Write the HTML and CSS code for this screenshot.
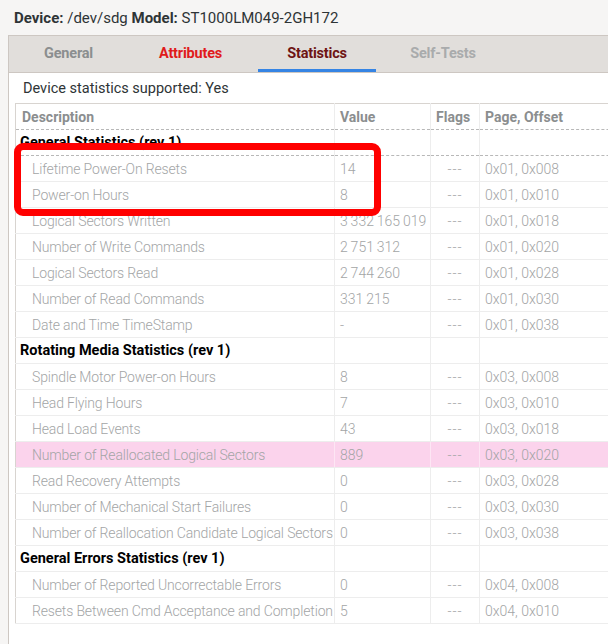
FILE: index.html
```html
<!DOCTYPE html>
<html lang="en">
<head>
    <meta charset="UTF-8">
    <title>Device Statistics</title>
    <link rel="stylesheet" href="styles.css">
</head>
<body>
    <div class="device-line">
        <b>Device:</b> /dev/sdg <b>Model:</b> ST1000LM049-2GH172
    </div>
    <div class="frame">
        <div class="tabs">
            <div class="tab tab-general">General</div>
            <div class="tab tab-attributes">Attributes</div>
            <div class="tab tab-statistics active">Statistics</div>
            <div class="tab tab-selftests">Self-Tests</div>
        </div>
        <div class="page">
            <div class="supported">Device statistics supported: Yes</div>
            <div class="table-wrap">
                <table class="stats">
                    <colgroup>
                        <col class="c-desc">
                        <col class="c-value">
                        <col class="c-flags">
                        <col class="c-page">
                    </colgroup>
                    <thead>
                        <tr>
                            <th>Description</th>
                            <th>Value</th>
                            <th>Flags</th>
                            <th>Page, Offset</th>
                        </tr>
                    </thead>
                    <tbody id="rows"></tbody>
                </table>
                <div class="highlight-box"></div>
            </div>
        </div>
    </div>

    <script>
        const rows = [
            ['h', 'General Statistics (rev 1)'],
            ['r', 'Lifetime Power-On Resets', '14', '0x01, 0x008'],
            ['r', 'Power-on Hours', '8', '0x01, 0x010'],
            ['r', 'Logical Sectors Written', '3\u2009332\u2009165\u2009019', '0x01, 0x018'],
            ['r', 'Number of Write Commands', '2\u2009751\u2009312', '0x01, 0x020'],
            ['r', 'Logical Sectors Read', '2\u2009744\u2009260', '0x01, 0x028'],
            ['r', 'Number of Read Commands', '331\u2009215', '0x01, 0x030'],
            ['r', 'Date and Time TimeStamp', '-', '0x01, 0x038'],
            ['h', 'Rotating Media Statistics (rev 1)'],
            ['r', 'Spindle Motor Power-on Hours', '8', '0x03, 0x008'],
            ['r', 'Head Flying Hours', '7', '0x03, 0x010'],
            ['r', 'Head Load Events', '43', '0x03, 0x018'],
            ['w', 'Number of Reallocated Logical Sectors', '889', '0x03, 0x020'],
            ['r', 'Read Recovery Attempts', '0', '0x03, 0x028'],
            ['r', 'Number of Mechanical Start Failures', '0', '0x03, 0x030'],
            ['r', 'Number of Reallocation Candidate Logical Sectors', '0', '0x03, 0x038'],
            ['h', 'General Errors Statistics (rev 1)'],
            ['r', 'Number of Reported Uncorrectable Errors', '0', '0x04, 0x008'],
            ['r', 'Resets Between Cmd Acceptance and Completion', '5', '0x04, 0x010']
        ];

        const body = document.getElementById('rows');
        let first = true;
        rows.forEach(r => {
            const tr = document.createElement('tr');
            if (r[0] === 'h') {
                tr.className = first ? 'section focused' : 'section';
                first = false;
                tr.innerHTML = `<td>${r[1]}</td><td></td><td></td><td></td>`;
            } else {
                tr.className = r[0] === 'w' ? 'item warn' : 'item';
                tr.innerHTML = `<td>${r[1]}</td><td>${r[2]}</td><td>---</td><td>${r[3]}</td>`;
            }
            body.appendChild(tr);
        });
    </script>
</body>
</html>
```

FILE: styles.css
```css
body {
    margin: 0;
    padding: 0;
    width: 608px;
    height: 644px;
    overflow: hidden;
    background-color: #f6f5f4;
    font-family: "Roboto", "Open Sans", sans-serif;
    color: #2e3436;
}

.device-line {
    height: 35px;
    line-height: 36px;
    padding-left: 14px;
    font-size: 15px;
    color: #2e3436;
}

.frame {
    margin-left: 8px;
    width: 640px;
    height: 620px;
    border: 1px solid #cdc7c2;
    border-right: none;
    background-color: #ffffff;
}

.tabs {
    display: flex;
    gap: 6px;
    height: 36px;
    padding-left: 5px;
    background-color: #e1dedb;
    border-bottom: 1px solid #cdc7c2;
}

.tab {
    box-sizing: border-box;
    height: 36px;
    padding-top: 3px;
    line-height: 30px;
    font-size: 14.5px;
    font-weight: bold;
    text-align: center;
    letter-spacing: -0.2px;
    white-space: nowrap;
    border-bottom: 3px solid transparent;
}

.tab-general {
    width: 109px;
    color: #8b8e8f;
}

.tab-attributes {
    width: 123px;
    color: #e01b1b;
}

.tab-statistics {
    width: 118px;
    color: #6e1414;
}

.tab-selftests {
    width: 122px;
    color: #a9abac;
}

.tab.active {
    border-bottom-color: #3584e4;
}

.page {
    padding: 5px 0 0 6px;
}

.supported {
    height: 25px;
    line-height: 21px;
    padding-left: 8px;
    font-size: 14.5px;
    color: #2e3436;
}

.table-wrap {
    position: relative;
}

.stats {
    border-collapse: collapse;
    table-layout: fixed;
    width: 640px;
    border-top: 1px solid #d8d4d0;
    border-left: 1px solid #d8d4d0;
    font-size: 14px;
}

.c-desc {
    width: 319px;
}

.c-value {
    width: 96px;
}

.c-flags {
    width: 49px;
}

.c-page {
    width: 176px;
}

.stats th,
.stats td {
    height: 25px;
    padding: 0 5px;
    text-align: left;
    white-space: nowrap;
    overflow: hidden;
    border-right: 1px solid #ededed;
    border-bottom: 1px solid #ededed;
}

.stats th {
    color: #8b8e8f;
    font-weight: bold;
    border-bottom: 1px dashed #b8b8b8;
}

.stats th:first-child {
    padding-left: 6px;
}

.stats tr.section td {
    color: #000000;
    font-weight: bold;
    font-size: 14.5px;
    padding-left: 4px;
}

.stats tr.focused td {
    border-bottom: 1px dashed #b8b8b8;
}

.stats tr.item td {
    color: #a3a5a6;
    font-weight: 300;
}

.stats tr.item td:first-child {
    padding-left: 16px;
    letter-spacing: -0.15px;
}

.stats tr.item td:nth-child(3) {
    text-align: center;
    letter-spacing: 1px;
}

.stats tr.warn td {
    background-color: #fbd3ec;
    border-right-color: #fde6f4;
}

.highlight-box {
    position: absolute;
    left: -1px;
    top: 40px;
    width: 353px;
    height: 59px;
    border: 7px solid #ff0000;
    border-radius: 9px;
}
```
